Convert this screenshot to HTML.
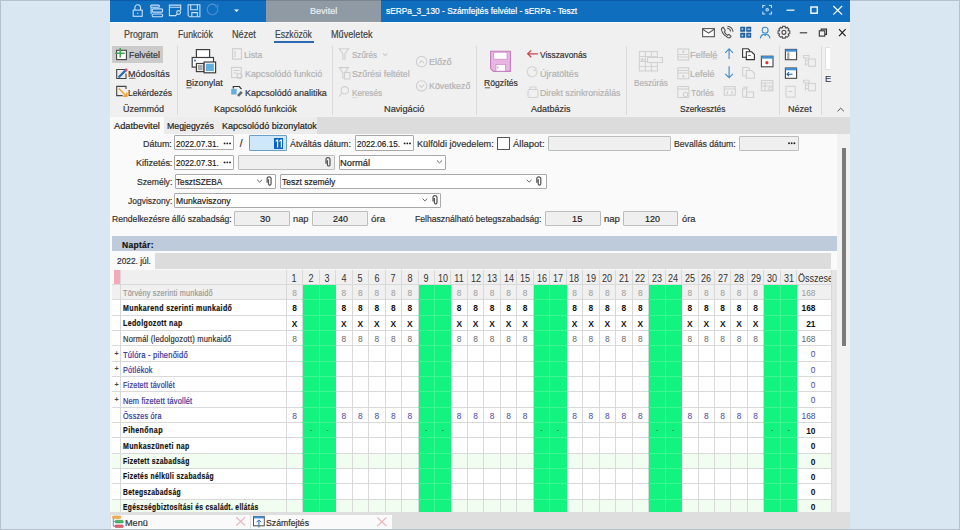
<!DOCTYPE html>
<html><head><meta charset="utf-8">
<style>
*{box-sizing:border-box;margin:0;padding:0}
html,body{width:960px;height:530px;overflow:hidden;background:#d8e7f2;font-family:"Liberation Sans",sans-serif;color:#222;position:relative}
.a{position:absolute}
.t{position:absolute;white-space:nowrap;line-height:1;transform-origin:0 50%;-webkit-text-stroke:0.2px currentColor}
.sep{position:absolute;top:46px;width:1px;height:68.5px;background:#dadada}
.fb{position:absolute;background:#fff;border:1px solid #a9a9a9;border-radius:1px}
.fd{position:absolute;background:#efefef;border:1px solid #bdbdbd;border-radius:1px}
.hl{left:112px;width:719px;height:1px;background:#d9d9d9}
.vl{top:269.5px;width:1px;height:242.5px;background:#d9d9d9}
.hd{position:absolute;top:272.5px;width:20px;text-align:center;font-size:10.5px;line-height:11px;color:#333;transform:scaleX(0.86)}
.pl{position:absolute;left:114.6px;font-size:7.2px;line-height:8px;color:#444;font-weight:700}
.c{position:absolute;width:16px;text-align:center;font-size:8.4px;line-height:9px}
.tot{position:absolute;left:775px;width:40.5px;text-align:right;font-size:8.4px;line-height:9px}
.cg{color:#9a9a9a}
.cb{color:#111;font-weight:700}
.cn{color:#666}
.cbl{color:#4848a8}
.dash{color:#333;font-size:7px;margin-top:-1.5px}
svg{position:absolute;overflow:visible}

</style></head><body>
<!-- window -->
<div class="a" style="left:110px;top:0;width:740px;height:530px;background:#f0f0f0"></div>
<!-- title bar -->
<div class="a" style="left:110px;top:0;width:740px;height:22px;background:#106ebe"></div>
<div class="a" style="left:266.25px;top:0;width:115px;height:22px;background:#909aa4"></div>
<div class="a" style="left:110px;top:0;width:156px;height:1px;background:#0b5aa3"></div>
<div class="a" style="left:266.25px;top:0;width:115px;height:1px;background:#7d858e"></div>
<div class="a" style="left:381.25px;top:0;width:469px;height:1px;background:#0b5aa3"></div>
<div class="a" style="left:110px;top:22px;width:740px;height:1px;background:#f7f7f7"></div>
<div class="a" style="left:274px;top:41px;width:40px;height:2px;background:#2c6bb3"></div>
<!-- ribbon -->
<div class="a" style="left:112px;top:45.5px;width:50.5px;height:17.5px;background:#cbcbcb"></div>
<div class="sep" style="left:177px"></div>
<div class="sep" style="left:332px"></div>
<div class="sep" style="left:476px"></div>
<div class="sep" style="left:626px"></div>
<div class="sep" style="left:779px"></div>
<div class="sep" style="left:821px"></div>
<div class="a" style="left:825px;top:47px;width:5px;height:23px;background:#fff;border:1px solid #e0e0e0;border-right:none"></div>
<!-- doc tab strip -->
<div class="a" style="left:110px;top:116.7px;width:740px;height:17px;background:#dcdcdc"></div>
<div class="a" style="left:110px;top:117.2px;width:53.75px;height:16.5px;background:#fafafa"></div>
<div class="a" style="left:163.75px;top:116.7px;width:52.75px;height:17px;background:#ececec"></div>
<div class="a" style="left:216.5px;top:116.7px;width:100.7px;height:17px;background:#ececec"></div>
<!-- content panel -->
<div class="a" style="left:110px;top:133.7px;width:727px;height:378.5px;background:#fafafa"></div>
<div class="a" style="left:837px;top:133.7px;width:13px;height:378.5px;background:#f2f2f2"></div>
<div class="a" style="left:831px;top:269.5px;width:6px;height:242.5px;background:#e4e4e4"></div>
<div class="a" style="left:841.7px;top:148.3px;width:4.5px;height:198px;background:#7b7b7b"></div>
<!-- form fields -->
<div class="fb" style="left:174.4px;top:135.3px;width:59.6px;height:15px"></div>
<div class="fb" style="left:249.2px;top:135.2px;width:38.1px;height:15.6px;background:#cfe8f9;border-color:#6c9fc6"></div>
<div class="a" style="left:274px;top:137.8px;width:9.4px;height:11px;background:#0a62bd"></div>
<div class="fb" style="left:354.6px;top:135.2px;width:59.8px;height:15.6px"></div>
<div class="a" style="left:497px;top:136.7px;width:13px;height:13px;border:1px solid #555;background:#fff"></div>
<div class="fd" style="left:547.9px;top:135.8px;width:122.9px;height:15px"></div>
<div class="fd" style="left:739.25px;top:135.5px;width:59.5px;height:15px"></div>
<div class="fb" style="left:174.4px;top:154.6px;width:59.6px;height:15px"></div>
<div class="fd" style="left:237.9px;top:154.6px;width:97.3px;height:15px"></div>
<div class="fb" style="left:338.75px;top:154.6px;width:107px;height:15px"></div>
<div class="fb" style="left:174.6px;top:173.8px;width:101.65px;height:15px"></div>
<div class="fb" style="left:280.4px;top:173.8px;width:266.3px;height:15px"></div>
<div class="fb" style="left:174.4px;top:192.6px;width:266.6px;height:15px"></div>
<div class="fd" style="left:234.2px;top:211.25px;width:55.6px;height:14.6px"></div>
<div class="fd" style="left:312px;top:211.25px;width:55.9px;height:14.6px"></div>
<div class="fd" style="left:545.2px;top:211.25px;width:56.3px;height:14.6px"></div>
<div class="fd" style="left:623.3px;top:211.25px;width:55.2px;height:14.6px"></div>
<!-- naptar -->
<div class="a" style="left:112.2px;top:236px;width:724.8px;height:14.8px;background:#bdcbdb"></div>
<div class="a" style="left:112.2px;top:253px;width:718.9px;height:15.6px;background:#dcdcdc"></div>
<div class="a" style="left:112.2px;top:253px;width:42.6px;height:15.6px;background:#fafafa"></div>
<div class="a" style="left:113.5px;top:269.5px;width:717.5px;height:15px;background:#efefef"></div>
<div class="a" style="left:113.5px;top:270px;width:7.2px;height:14.5px;background:#f4a9bb"></div>
<div class="a" style="left:112px;top:284.50px;width:719px;height:15.43px;background:#f0f0f0"></div>
<div class="a" style="left:112px;top:299.83px;width:719px;height:15.43px;background:#ffffff"></div>
<div class="a" style="left:112px;top:315.16px;width:719px;height:15.43px;background:#ffffff"></div>
<div class="a" style="left:112px;top:330.49px;width:719px;height:15.43px;background:#ffffff"></div>
<div class="a" style="left:112px;top:345.82px;width:719px;height:15.43px;background:#ffffff"></div>
<div class="a" style="left:112px;top:361.15px;width:719px;height:15.43px;background:#ffffff"></div>
<div class="a" style="left:112px;top:376.48px;width:719px;height:15.43px;background:#ffffff"></div>
<div class="a" style="left:112px;top:391.81px;width:719px;height:15.43px;background:#ffffff"></div>
<div class="a" style="left:112px;top:407.14px;width:719px;height:15.43px;background:#ffffff"></div>
<div class="a" style="left:112px;top:422.47px;width:719px;height:15.43px;background:#ffffff"></div>
<div class="a" style="left:112px;top:437.80px;width:719px;height:15.43px;background:#ffffff"></div>
<div class="a" style="left:112px;top:453.13px;width:719px;height:15.43px;background:#f0fdf0"></div>
<div class="a" style="left:112px;top:468.46px;width:719px;height:15.43px;background:#ffffff"></div>
<div class="a" style="left:112px;top:483.79px;width:719px;height:15.43px;background:#ffffff"></div>
<div class="a" style="left:112px;top:499.12px;width:719px;height:15.43px;background:#f0fdf0"></div>
<div class="a hl" style="top:284.00px"></div>
<div class="a hl" style="top:299.33px"></div>
<div class="a hl" style="top:314.66px"></div>
<div class="a hl" style="top:329.99px"></div>
<div class="a hl" style="top:345.32px"></div>
<div class="a hl" style="top:360.65px"></div>
<div class="a hl" style="top:375.98px"></div>
<div class="a hl" style="top:391.31px"></div>
<div class="a hl" style="top:406.64px"></div>
<div class="a hl" style="top:421.97px"></div>
<div class="a hl" style="top:437.30px"></div>
<div class="a hl" style="top:452.63px"></div>
<div class="a hl" style="top:467.96px"></div>
<div class="a hl" style="top:483.29px"></div>
<div class="a hl" style="top:498.62px"></div>
<div class="a vl" style="left:120.20px"></div>
<div class="a vl" style="left:285.75px"></div>
<div class="a vl" style="left:302.22px"></div>
<div class="a vl" style="left:318.69px"></div>
<div class="a vl" style="left:335.16px"></div>
<div class="a vl" style="left:351.63px"></div>
<div class="a vl" style="left:368.10px"></div>
<div class="a vl" style="left:384.57px"></div>
<div class="a vl" style="left:401.04px"></div>
<div class="a vl" style="left:417.51px"></div>
<div class="a vl" style="left:433.98px"></div>
<div class="a vl" style="left:450.45px"></div>
<div class="a vl" style="left:466.92px"></div>
<div class="a vl" style="left:483.39px"></div>
<div class="a vl" style="left:499.86px"></div>
<div class="a vl" style="left:516.33px"></div>
<div class="a vl" style="left:532.80px"></div>
<div class="a vl" style="left:549.27px"></div>
<div class="a vl" style="left:565.74px"></div>
<div class="a vl" style="left:582.21px"></div>
<div class="a vl" style="left:598.68px"></div>
<div class="a vl" style="left:615.15px"></div>
<div class="a vl" style="left:631.62px"></div>
<div class="a vl" style="left:648.09px"></div>
<div class="a vl" style="left:664.56px"></div>
<div class="a vl" style="left:681.03px"></div>
<div class="a vl" style="left:697.50px"></div>
<div class="a vl" style="left:713.97px"></div>
<div class="a vl" style="left:730.44px"></div>
<div class="a vl" style="left:746.91px"></div>
<div class="a vl" style="left:763.38px"></div>
<div class="a vl" style="left:779.85px"></div>
<div class="a vl" style="left:796.32px"></div>
<div class="a vl" style="left:830.50px"></div>
<div class="a" style="left:303.22px;top:284.5px;width:16.47px;height:227.5px;background:#12f47f"></div>
<div class="a" style="left:319.69px;top:284.5px;width:16.47px;height:227.5px;background:#12f47f"></div>
<div class="a" style="left:418.51px;top:284.5px;width:16.47px;height:227.5px;background:#12f47f"></div>
<div class="a" style="left:434.98px;top:284.5px;width:16.47px;height:227.5px;background:#12f47f"></div>
<div class="a" style="left:533.80px;top:284.5px;width:16.47px;height:227.5px;background:#12f47f"></div>
<div class="a" style="left:550.27px;top:284.5px;width:16.47px;height:227.5px;background:#12f47f"></div>
<div class="a" style="left:649.09px;top:284.5px;width:16.47px;height:227.5px;background:#12f47f"></div>
<div class="a" style="left:665.56px;top:284.5px;width:16.47px;height:227.5px;background:#12f47f"></div>
<div class="a" style="left:764.38px;top:284.5px;width:16.47px;height:227.5px;background:#12f47f"></div>
<div class="a" style="left:780.85px;top:284.5px;width:16.47px;height:227.5px;background:#12f47f"></div>
<div class="a" style="left:302.22px;top:299.33px;width:17.47px;height:1px;background:#3ff590"></div>
<div class="a" style="left:302.22px;top:314.66px;width:17.47px;height:1px;background:#3ff590"></div>
<div class="a" style="left:302.22px;top:329.99px;width:17.47px;height:1px;background:#3ff590"></div>
<div class="a" style="left:302.22px;top:345.32px;width:17.47px;height:1px;background:#3ff590"></div>
<div class="a" style="left:302.22px;top:360.65px;width:17.47px;height:1px;background:#3ff590"></div>
<div class="a" style="left:302.22px;top:375.98px;width:17.47px;height:1px;background:#3ff590"></div>
<div class="a" style="left:302.22px;top:391.31px;width:17.47px;height:1px;background:#3ff590"></div>
<div class="a" style="left:302.22px;top:406.64px;width:17.47px;height:1px;background:#3ff590"></div>
<div class="a" style="left:302.22px;top:421.97px;width:17.47px;height:1px;background:#3ff590"></div>
<div class="a" style="left:302.22px;top:437.30px;width:17.47px;height:1px;background:#3ff590"></div>
<div class="a" style="left:302.22px;top:452.63px;width:17.47px;height:1px;background:#3ff590"></div>
<div class="a" style="left:302.22px;top:467.96px;width:17.47px;height:1px;background:#3ff590"></div>
<div class="a" style="left:302.22px;top:483.29px;width:17.47px;height:1px;background:#3ff590"></div>
<div class="a" style="left:302.22px;top:498.62px;width:17.47px;height:1px;background:#3ff590"></div>
<div class="a" style="left:318.69px;top:284.5px;width:1px;height:227.5px;background:#3ff590"></div>
<div class="a" style="left:318.69px;top:299.33px;width:17.47px;height:1px;background:#3ff590"></div>
<div class="a" style="left:318.69px;top:314.66px;width:17.47px;height:1px;background:#3ff590"></div>
<div class="a" style="left:318.69px;top:329.99px;width:17.47px;height:1px;background:#3ff590"></div>
<div class="a" style="left:318.69px;top:345.32px;width:17.47px;height:1px;background:#3ff590"></div>
<div class="a" style="left:318.69px;top:360.65px;width:17.47px;height:1px;background:#3ff590"></div>
<div class="a" style="left:318.69px;top:375.98px;width:17.47px;height:1px;background:#3ff590"></div>
<div class="a" style="left:318.69px;top:391.31px;width:17.47px;height:1px;background:#3ff590"></div>
<div class="a" style="left:318.69px;top:406.64px;width:17.47px;height:1px;background:#3ff590"></div>
<div class="a" style="left:318.69px;top:421.97px;width:17.47px;height:1px;background:#3ff590"></div>
<div class="a" style="left:318.69px;top:437.30px;width:17.47px;height:1px;background:#3ff590"></div>
<div class="a" style="left:318.69px;top:452.63px;width:17.47px;height:1px;background:#3ff590"></div>
<div class="a" style="left:318.69px;top:467.96px;width:17.47px;height:1px;background:#3ff590"></div>
<div class="a" style="left:318.69px;top:483.29px;width:17.47px;height:1px;background:#3ff590"></div>
<div class="a" style="left:318.69px;top:498.62px;width:17.47px;height:1px;background:#3ff590"></div>
<div class="a" style="left:417.51px;top:299.33px;width:17.47px;height:1px;background:#3ff590"></div>
<div class="a" style="left:417.51px;top:314.66px;width:17.47px;height:1px;background:#3ff590"></div>
<div class="a" style="left:417.51px;top:329.99px;width:17.47px;height:1px;background:#3ff590"></div>
<div class="a" style="left:417.51px;top:345.32px;width:17.47px;height:1px;background:#3ff590"></div>
<div class="a" style="left:417.51px;top:360.65px;width:17.47px;height:1px;background:#3ff590"></div>
<div class="a" style="left:417.51px;top:375.98px;width:17.47px;height:1px;background:#3ff590"></div>
<div class="a" style="left:417.51px;top:391.31px;width:17.47px;height:1px;background:#3ff590"></div>
<div class="a" style="left:417.51px;top:406.64px;width:17.47px;height:1px;background:#3ff590"></div>
<div class="a" style="left:417.51px;top:421.97px;width:17.47px;height:1px;background:#3ff590"></div>
<div class="a" style="left:417.51px;top:437.30px;width:17.47px;height:1px;background:#3ff590"></div>
<div class="a" style="left:417.51px;top:452.63px;width:17.47px;height:1px;background:#3ff590"></div>
<div class="a" style="left:417.51px;top:467.96px;width:17.47px;height:1px;background:#3ff590"></div>
<div class="a" style="left:417.51px;top:483.29px;width:17.47px;height:1px;background:#3ff590"></div>
<div class="a" style="left:417.51px;top:498.62px;width:17.47px;height:1px;background:#3ff590"></div>
<div class="a" style="left:433.98px;top:284.5px;width:1px;height:227.5px;background:#3ff590"></div>
<div class="a" style="left:433.98px;top:299.33px;width:17.47px;height:1px;background:#3ff590"></div>
<div class="a" style="left:433.98px;top:314.66px;width:17.47px;height:1px;background:#3ff590"></div>
<div class="a" style="left:433.98px;top:329.99px;width:17.47px;height:1px;background:#3ff590"></div>
<div class="a" style="left:433.98px;top:345.32px;width:17.47px;height:1px;background:#3ff590"></div>
<div class="a" style="left:433.98px;top:360.65px;width:17.47px;height:1px;background:#3ff590"></div>
<div class="a" style="left:433.98px;top:375.98px;width:17.47px;height:1px;background:#3ff590"></div>
<div class="a" style="left:433.98px;top:391.31px;width:17.47px;height:1px;background:#3ff590"></div>
<div class="a" style="left:433.98px;top:406.64px;width:17.47px;height:1px;background:#3ff590"></div>
<div class="a" style="left:433.98px;top:421.97px;width:17.47px;height:1px;background:#3ff590"></div>
<div class="a" style="left:433.98px;top:437.30px;width:17.47px;height:1px;background:#3ff590"></div>
<div class="a" style="left:433.98px;top:452.63px;width:17.47px;height:1px;background:#3ff590"></div>
<div class="a" style="left:433.98px;top:467.96px;width:17.47px;height:1px;background:#3ff590"></div>
<div class="a" style="left:433.98px;top:483.29px;width:17.47px;height:1px;background:#3ff590"></div>
<div class="a" style="left:433.98px;top:498.62px;width:17.47px;height:1px;background:#3ff590"></div>
<div class="a" style="left:532.80px;top:299.33px;width:17.47px;height:1px;background:#3ff590"></div>
<div class="a" style="left:532.80px;top:314.66px;width:17.47px;height:1px;background:#3ff590"></div>
<div class="a" style="left:532.80px;top:329.99px;width:17.47px;height:1px;background:#3ff590"></div>
<div class="a" style="left:532.80px;top:345.32px;width:17.47px;height:1px;background:#3ff590"></div>
<div class="a" style="left:532.80px;top:360.65px;width:17.47px;height:1px;background:#3ff590"></div>
<div class="a" style="left:532.80px;top:375.98px;width:17.47px;height:1px;background:#3ff590"></div>
<div class="a" style="left:532.80px;top:391.31px;width:17.47px;height:1px;background:#3ff590"></div>
<div class="a" style="left:532.80px;top:406.64px;width:17.47px;height:1px;background:#3ff590"></div>
<div class="a" style="left:532.80px;top:421.97px;width:17.47px;height:1px;background:#3ff590"></div>
<div class="a" style="left:532.80px;top:437.30px;width:17.47px;height:1px;background:#3ff590"></div>
<div class="a" style="left:532.80px;top:452.63px;width:17.47px;height:1px;background:#3ff590"></div>
<div class="a" style="left:532.80px;top:467.96px;width:17.47px;height:1px;background:#3ff590"></div>
<div class="a" style="left:532.80px;top:483.29px;width:17.47px;height:1px;background:#3ff590"></div>
<div class="a" style="left:532.80px;top:498.62px;width:17.47px;height:1px;background:#3ff590"></div>
<div class="a" style="left:549.27px;top:284.5px;width:1px;height:227.5px;background:#3ff590"></div>
<div class="a" style="left:549.27px;top:299.33px;width:17.47px;height:1px;background:#3ff590"></div>
<div class="a" style="left:549.27px;top:314.66px;width:17.47px;height:1px;background:#3ff590"></div>
<div class="a" style="left:549.27px;top:329.99px;width:17.47px;height:1px;background:#3ff590"></div>
<div class="a" style="left:549.27px;top:345.32px;width:17.47px;height:1px;background:#3ff590"></div>
<div class="a" style="left:549.27px;top:360.65px;width:17.47px;height:1px;background:#3ff590"></div>
<div class="a" style="left:549.27px;top:375.98px;width:17.47px;height:1px;background:#3ff590"></div>
<div class="a" style="left:549.27px;top:391.31px;width:17.47px;height:1px;background:#3ff590"></div>
<div class="a" style="left:549.27px;top:406.64px;width:17.47px;height:1px;background:#3ff590"></div>
<div class="a" style="left:549.27px;top:421.97px;width:17.47px;height:1px;background:#3ff590"></div>
<div class="a" style="left:549.27px;top:437.30px;width:17.47px;height:1px;background:#3ff590"></div>
<div class="a" style="left:549.27px;top:452.63px;width:17.47px;height:1px;background:#3ff590"></div>
<div class="a" style="left:549.27px;top:467.96px;width:17.47px;height:1px;background:#3ff590"></div>
<div class="a" style="left:549.27px;top:483.29px;width:17.47px;height:1px;background:#3ff590"></div>
<div class="a" style="left:549.27px;top:498.62px;width:17.47px;height:1px;background:#3ff590"></div>
<div class="a" style="left:648.09px;top:299.33px;width:17.47px;height:1px;background:#3ff590"></div>
<div class="a" style="left:648.09px;top:314.66px;width:17.47px;height:1px;background:#3ff590"></div>
<div class="a" style="left:648.09px;top:329.99px;width:17.47px;height:1px;background:#3ff590"></div>
<div class="a" style="left:648.09px;top:345.32px;width:17.47px;height:1px;background:#3ff590"></div>
<div class="a" style="left:648.09px;top:360.65px;width:17.47px;height:1px;background:#3ff590"></div>
<div class="a" style="left:648.09px;top:375.98px;width:17.47px;height:1px;background:#3ff590"></div>
<div class="a" style="left:648.09px;top:391.31px;width:17.47px;height:1px;background:#3ff590"></div>
<div class="a" style="left:648.09px;top:406.64px;width:17.47px;height:1px;background:#3ff590"></div>
<div class="a" style="left:648.09px;top:421.97px;width:17.47px;height:1px;background:#3ff590"></div>
<div class="a" style="left:648.09px;top:437.30px;width:17.47px;height:1px;background:#3ff590"></div>
<div class="a" style="left:648.09px;top:452.63px;width:17.47px;height:1px;background:#3ff590"></div>
<div class="a" style="left:648.09px;top:467.96px;width:17.47px;height:1px;background:#3ff590"></div>
<div class="a" style="left:648.09px;top:483.29px;width:17.47px;height:1px;background:#3ff590"></div>
<div class="a" style="left:648.09px;top:498.62px;width:17.47px;height:1px;background:#3ff590"></div>
<div class="a" style="left:664.56px;top:284.5px;width:1px;height:227.5px;background:#3ff590"></div>
<div class="a" style="left:664.56px;top:299.33px;width:17.47px;height:1px;background:#3ff590"></div>
<div class="a" style="left:664.56px;top:314.66px;width:17.47px;height:1px;background:#3ff590"></div>
<div class="a" style="left:664.56px;top:329.99px;width:17.47px;height:1px;background:#3ff590"></div>
<div class="a" style="left:664.56px;top:345.32px;width:17.47px;height:1px;background:#3ff590"></div>
<div class="a" style="left:664.56px;top:360.65px;width:17.47px;height:1px;background:#3ff590"></div>
<div class="a" style="left:664.56px;top:375.98px;width:17.47px;height:1px;background:#3ff590"></div>
<div class="a" style="left:664.56px;top:391.31px;width:17.47px;height:1px;background:#3ff590"></div>
<div class="a" style="left:664.56px;top:406.64px;width:17.47px;height:1px;background:#3ff590"></div>
<div class="a" style="left:664.56px;top:421.97px;width:17.47px;height:1px;background:#3ff590"></div>
<div class="a" style="left:664.56px;top:437.30px;width:17.47px;height:1px;background:#3ff590"></div>
<div class="a" style="left:664.56px;top:452.63px;width:17.47px;height:1px;background:#3ff590"></div>
<div class="a" style="left:664.56px;top:467.96px;width:17.47px;height:1px;background:#3ff590"></div>
<div class="a" style="left:664.56px;top:483.29px;width:17.47px;height:1px;background:#3ff590"></div>
<div class="a" style="left:664.56px;top:498.62px;width:17.47px;height:1px;background:#3ff590"></div>
<div class="a" style="left:763.38px;top:299.33px;width:17.47px;height:1px;background:#3ff590"></div>
<div class="a" style="left:763.38px;top:314.66px;width:17.47px;height:1px;background:#3ff590"></div>
<div class="a" style="left:763.38px;top:329.99px;width:17.47px;height:1px;background:#3ff590"></div>
<div class="a" style="left:763.38px;top:345.32px;width:17.47px;height:1px;background:#3ff590"></div>
<div class="a" style="left:763.38px;top:360.65px;width:17.47px;height:1px;background:#3ff590"></div>
<div class="a" style="left:763.38px;top:375.98px;width:17.47px;height:1px;background:#3ff590"></div>
<div class="a" style="left:763.38px;top:391.31px;width:17.47px;height:1px;background:#3ff590"></div>
<div class="a" style="left:763.38px;top:406.64px;width:17.47px;height:1px;background:#3ff590"></div>
<div class="a" style="left:763.38px;top:421.97px;width:17.47px;height:1px;background:#3ff590"></div>
<div class="a" style="left:763.38px;top:437.30px;width:17.47px;height:1px;background:#3ff590"></div>
<div class="a" style="left:763.38px;top:452.63px;width:17.47px;height:1px;background:#3ff590"></div>
<div class="a" style="left:763.38px;top:467.96px;width:17.47px;height:1px;background:#3ff590"></div>
<div class="a" style="left:763.38px;top:483.29px;width:17.47px;height:1px;background:#3ff590"></div>
<div class="a" style="left:763.38px;top:498.62px;width:17.47px;height:1px;background:#3ff590"></div>
<div class="a" style="left:779.85px;top:284.5px;width:1px;height:227.5px;background:#3ff590"></div>
<div class="a" style="left:779.85px;top:299.33px;width:17.47px;height:1px;background:#3ff590"></div>
<div class="a" style="left:779.85px;top:314.66px;width:17.47px;height:1px;background:#3ff590"></div>
<div class="a" style="left:779.85px;top:329.99px;width:17.47px;height:1px;background:#3ff590"></div>
<div class="a" style="left:779.85px;top:345.32px;width:17.47px;height:1px;background:#3ff590"></div>
<div class="a" style="left:779.85px;top:360.65px;width:17.47px;height:1px;background:#3ff590"></div>
<div class="a" style="left:779.85px;top:375.98px;width:17.47px;height:1px;background:#3ff590"></div>
<div class="a" style="left:779.85px;top:391.31px;width:17.47px;height:1px;background:#3ff590"></div>
<div class="a" style="left:779.85px;top:406.64px;width:17.47px;height:1px;background:#3ff590"></div>
<div class="a" style="left:779.85px;top:421.97px;width:17.47px;height:1px;background:#3ff590"></div>
<div class="a" style="left:779.85px;top:437.30px;width:17.47px;height:1px;background:#3ff590"></div>
<div class="a" style="left:779.85px;top:452.63px;width:17.47px;height:1px;background:#3ff590"></div>
<div class="a" style="left:779.85px;top:467.96px;width:17.47px;height:1px;background:#3ff590"></div>
<div class="a" style="left:779.85px;top:483.29px;width:17.47px;height:1px;background:#3ff590"></div>
<div class="a" style="left:779.85px;top:498.62px;width:17.47px;height:1px;background:#3ff590"></div>
<div class="hd" style="left:284.49px">1</div>
<div class="hd" style="left:300.95px">2</div>
<div class="hd" style="left:317.43px">3</div>
<div class="hd" style="left:333.89px">4</div>
<div class="hd" style="left:350.37px">5</div>
<div class="hd" style="left:366.83px">6</div>
<div class="hd" style="left:383.31px">7</div>
<div class="hd" style="left:399.77px">8</div>
<div class="hd" style="left:416.25px">9</div>
<div class="hd" style="left:432.71px">10</div>
<div class="hd" style="left:449.19px">11</div>
<div class="hd" style="left:465.65px">12</div>
<div class="hd" style="left:482.12px">13</div>
<div class="hd" style="left:498.59px">14</div>
<div class="hd" style="left:515.07px">15</div>
<div class="hd" style="left:531.53px">16</div>
<div class="hd" style="left:548.00px">17</div>
<div class="hd" style="left:564.47px">18</div>
<div class="hd" style="left:580.94px">19</div>
<div class="hd" style="left:597.41px">20</div>
<div class="hd" style="left:613.88px">21</div>
<div class="hd" style="left:630.36px">22</div>
<div class="hd" style="left:646.83px">23</div>
<div class="hd" style="left:663.29px">24</div>
<div class="hd" style="left:679.76px">25</div>
<div class="hd" style="left:696.23px">26</div>
<div class="hd" style="left:712.70px">27</div>
<div class="hd" style="left:729.17px">28</div>
<div class="hd" style="left:745.64px">29</div>
<div class="hd" style="left:762.12px">30</div>
<div class="hd" style="left:778.59px">31</div>
<div class="a" style="left:797px;top:269.5px;width:34px;height:15px;overflow:hidden"><div class="hd" style="left:1px;top:3px;width:60px;text-align:left;transform-origin:0 0;transform:scaleX(0.86)">Összesen</div></div>
<div class="pl" style="top:349.88px">+</div>
<div class="pl" style="top:365.21px">+</div>
<div class="pl" style="top:380.55px">+</div>
<div class="pl" style="top:395.88px">+</div>
<div class="c cg" style="left:286.49px;top:288.87px">8</div>
<div class="c cb" style="left:286.49px;top:304.19px">8</div>
<div class="c cb" style="left:286.49px;top:319.53px">X</div>
<div class="c cn" style="left:286.49px;top:334.86px">8</div>
<div class="c cbl" style="left:286.49px;top:411.50px">8</div>
<div class="c dash" style="left:302.95px;top:426.84px">-</div>
<div class="c dash" style="left:319.43px;top:426.84px">-</div>
<div class="c cg" style="left:335.89px;top:288.87px">8</div>
<div class="c cb" style="left:335.89px;top:304.19px">8</div>
<div class="c cb" style="left:335.89px;top:319.53px">X</div>
<div class="c cn" style="left:335.89px;top:334.86px">8</div>
<div class="c cbl" style="left:335.89px;top:411.50px">8</div>
<div class="c cg" style="left:352.37px;top:288.87px">8</div>
<div class="c cb" style="left:352.37px;top:304.19px">8</div>
<div class="c cb" style="left:352.37px;top:319.53px">X</div>
<div class="c cn" style="left:352.37px;top:334.86px">8</div>
<div class="c cbl" style="left:352.37px;top:411.50px">8</div>
<div class="c cg" style="left:368.83px;top:288.87px">8</div>
<div class="c cb" style="left:368.83px;top:304.19px">8</div>
<div class="c cb" style="left:368.83px;top:319.53px">X</div>
<div class="c cn" style="left:368.83px;top:334.86px">8</div>
<div class="c cbl" style="left:368.83px;top:411.50px">8</div>
<div class="c cg" style="left:385.31px;top:288.87px">8</div>
<div class="c cb" style="left:385.31px;top:304.19px">8</div>
<div class="c cb" style="left:385.31px;top:319.53px">X</div>
<div class="c cn" style="left:385.31px;top:334.86px">8</div>
<div class="c cbl" style="left:385.31px;top:411.50px">8</div>
<div class="c cg" style="left:401.77px;top:288.87px">8</div>
<div class="c cb" style="left:401.77px;top:304.19px">8</div>
<div class="c cb" style="left:401.77px;top:319.53px">X</div>
<div class="c cn" style="left:401.77px;top:334.86px">8</div>
<div class="c cbl" style="left:401.77px;top:411.50px">8</div>
<div class="c dash" style="left:418.25px;top:426.84px">-</div>
<div class="c dash" style="left:434.71px;top:426.84px">-</div>
<div class="c cg" style="left:451.19px;top:288.87px">8</div>
<div class="c cb" style="left:451.19px;top:304.19px">8</div>
<div class="c cb" style="left:451.19px;top:319.53px">X</div>
<div class="c cn" style="left:451.19px;top:334.86px">8</div>
<div class="c cbl" style="left:451.19px;top:411.50px">8</div>
<div class="c cg" style="left:467.65px;top:288.87px">8</div>
<div class="c cb" style="left:467.65px;top:304.19px">8</div>
<div class="c cb" style="left:467.65px;top:319.53px">X</div>
<div class="c cn" style="left:467.65px;top:334.86px">8</div>
<div class="c cbl" style="left:467.65px;top:411.50px">8</div>
<div class="c cg" style="left:484.12px;top:288.87px">8</div>
<div class="c cb" style="left:484.12px;top:304.19px">8</div>
<div class="c cb" style="left:484.12px;top:319.53px">X</div>
<div class="c cn" style="left:484.12px;top:334.86px">8</div>
<div class="c cbl" style="left:484.12px;top:411.50px">8</div>
<div class="c cg" style="left:500.59px;top:288.87px">8</div>
<div class="c cb" style="left:500.59px;top:304.19px">8</div>
<div class="c cb" style="left:500.59px;top:319.53px">X</div>
<div class="c cn" style="left:500.59px;top:334.86px">8</div>
<div class="c cbl" style="left:500.59px;top:411.50px">8</div>
<div class="c cg" style="left:517.07px;top:288.87px">8</div>
<div class="c cb" style="left:517.07px;top:304.19px">8</div>
<div class="c cb" style="left:517.07px;top:319.53px">X</div>
<div class="c cn" style="left:517.07px;top:334.86px">8</div>
<div class="c cbl" style="left:517.07px;top:411.50px">8</div>
<div class="c dash" style="left:533.53px;top:426.84px">-</div>
<div class="c dash" style="left:550.00px;top:426.84px">-</div>
<div class="c cg" style="left:566.47px;top:288.87px">8</div>
<div class="c cb" style="left:566.47px;top:304.19px">8</div>
<div class="c cb" style="left:566.47px;top:319.53px">X</div>
<div class="c cn" style="left:566.47px;top:334.86px">8</div>
<div class="c cbl" style="left:566.47px;top:411.50px">8</div>
<div class="c cg" style="left:582.94px;top:288.87px">8</div>
<div class="c cb" style="left:582.94px;top:304.19px">8</div>
<div class="c cb" style="left:582.94px;top:319.53px">X</div>
<div class="c cn" style="left:582.94px;top:334.86px">8</div>
<div class="c cbl" style="left:582.94px;top:411.50px">8</div>
<div class="c cg" style="left:599.41px;top:288.87px">8</div>
<div class="c cb" style="left:599.41px;top:304.19px">8</div>
<div class="c cb" style="left:599.41px;top:319.53px">X</div>
<div class="c cn" style="left:599.41px;top:334.86px">8</div>
<div class="c cbl" style="left:599.41px;top:411.50px">8</div>
<div class="c cg" style="left:615.88px;top:288.87px">8</div>
<div class="c cb" style="left:615.88px;top:304.19px">8</div>
<div class="c cb" style="left:615.88px;top:319.53px">X</div>
<div class="c cn" style="left:615.88px;top:334.86px">8</div>
<div class="c cbl" style="left:615.88px;top:411.50px">8</div>
<div class="c cg" style="left:632.36px;top:288.87px">8</div>
<div class="c cb" style="left:632.36px;top:304.19px">8</div>
<div class="c cb" style="left:632.36px;top:319.53px">X</div>
<div class="c cn" style="left:632.36px;top:334.86px">8</div>
<div class="c cbl" style="left:632.36px;top:411.50px">8</div>
<div class="c dash" style="left:648.83px;top:426.84px">-</div>
<div class="c dash" style="left:665.29px;top:426.84px">-</div>
<div class="c cg" style="left:681.76px;top:288.87px">8</div>
<div class="c cb" style="left:681.76px;top:304.19px">8</div>
<div class="c cb" style="left:681.76px;top:319.53px">X</div>
<div class="c cn" style="left:681.76px;top:334.86px">8</div>
<div class="c cbl" style="left:681.76px;top:411.50px">8</div>
<div class="c cg" style="left:698.23px;top:288.87px">8</div>
<div class="c cb" style="left:698.23px;top:304.19px">8</div>
<div class="c cb" style="left:698.23px;top:319.53px">X</div>
<div class="c cn" style="left:698.23px;top:334.86px">8</div>
<div class="c cbl" style="left:698.23px;top:411.50px">8</div>
<div class="c cg" style="left:714.70px;top:288.87px">8</div>
<div class="c cb" style="left:714.70px;top:304.19px">8</div>
<div class="c cb" style="left:714.70px;top:319.53px">X</div>
<div class="c cn" style="left:714.70px;top:334.86px">8</div>
<div class="c cbl" style="left:714.70px;top:411.50px">8</div>
<div class="c cg" style="left:731.17px;top:288.87px">8</div>
<div class="c cb" style="left:731.17px;top:304.19px">8</div>
<div class="c cb" style="left:731.17px;top:319.53px">X</div>
<div class="c cn" style="left:731.17px;top:334.86px">8</div>
<div class="c cbl" style="left:731.17px;top:411.50px">8</div>
<div class="c cg" style="left:747.64px;top:288.87px">8</div>
<div class="c cb" style="left:747.64px;top:304.19px">8</div>
<div class="c cb" style="left:747.64px;top:319.53px">X</div>
<div class="c cn" style="left:747.64px;top:334.86px">8</div>
<div class="c cbl" style="left:747.64px;top:411.50px">8</div>
<div class="c dash" style="left:764.12px;top:426.84px">-</div>
<div class="c dash" style="left:780.59px;top:426.84px">-</div>
<div class="tot cg" style="top:288.87px">168</div>
<div class="tot cb" style="top:304.19px">168</div>
<div class="tot cb" style="top:319.53px">21</div>
<div class="tot cn" style="top:334.86px">168</div>
<div class="tot cbl" style="top:350.19px">0</div>
<div class="tot cbl" style="top:365.51px">0</div>
<div class="tot cbl" style="top:380.85px">0</div>
<div class="tot cbl" style="top:396.18px">0</div>
<div class="tot cbl" style="top:411.50px">168</div>
<div class="tot cb" style="top:426.84px">10</div>
<div class="tot cb" style="top:442.17px">0</div>
<div class="tot cb" style="top:457.50px">0</div>
<div class="tot cb" style="top:472.83px">0</div>
<div class="tot cb" style="top:488.15px">0</div>
<div class="tot cb" style="top:503.49px">0</div>
<!-- taskbar -->
<div class="a" style="left:110px;top:512px;width:740px;height:18px;background:#dedede"></div>
<div class="a" style="left:111px;top:514.5px;width:280.5px;height:14.5px;background:#fafafa"></div>
<div class="a" style="left:250px;top:514.5px;width:1px;height:14.5px;background:#e2e2e2"></div>

<div class="a" style="left:0;top:0;width:110px;height:1px;background:#b3c2ce"></div>
<div class="a" style="left:850px;top:0;width:110px;height:1px;background:#b3c2ce"></div>
<div class="a" style="left:0;top:529px;width:960px;height:1px;background:#b3bfca"></div>
<div class="a" style="left:0;top:0;width:1px;height:530px;background:#b3c2ce"></div>
<div class="a" style="left:959px;top:0;width:1px;height:530px;background:#b3c2ce"></div>
<div class="a" style="left:1px;top:1px;width:109px;height:2px;background:#dbe9f4"></div>
<div class="a" style="left:850px;top:1px;width:109px;height:2px;background:#dbe9f4"></div>
<svg width="960" height="530" viewBox="0 0 960 530" style="left:0;top:0" fill="none" stroke-linejoin="miter">
<!-- title bar icons -->
<g stroke="#c6e0f8" stroke-width="1.1">
  <path d="M134.9 10V7.6a2.8 2.8 0 0 1 5.6 0V10"/>
  <rect x="133.2" y="10.1" width="9" height="6.2"/>
  <path d="M137.7 12.8v1.2" stroke-width="1.2"/>
  <rect x="150.6" y="5.1" width="8.8" height="2.2" rx="1"/>
  <rect x="152.2" y="8.9" width="10.4" height="3.2" rx="1"/>
  <rect x="152.2" y="14" width="10.4" height="2.8" rx="1"/>
  <path d="M151.1 7.3v6.8"/>
  <path d="M176 15.6H169.4V5.1h11.3v5.5M169.4 7.3h11.3"/>
  <circle cx="178.6" cy="12.5" r="1.9"/>
  <path d="M177.2 13.9l-1.8 2"/>
  <path d="M188.1 4.8h11.8v12h-10.3l-1.5-1.5z"/>
  <path d="M190.7 4.8v4.9h6.7V4.8M191.8 16.8v-4.2h5.6v4.2"/>
</g>
<g stroke="#4f8fd3" stroke-width="1.1">
  <path d="M217.6 8.2a5.3 5.3 0 1 1 -1.2 -2.3"/>
  <path d="M217.7 4.5v2.4h-2.3"/>
</g>
<path d="M234 9.4h5l-2.5 2.6z" fill="#fff"/>
<g stroke="#c6e0f8" stroke-width="1.1">
  <path d="M762.8 8V5.5h2.5M769 5.5h2.5V8M771.5 11.5v2.5H769M765.3 14h-2.5v-2.5"/>
  <circle cx="767.2" cy="9.8" r="1.2"/>
</g>
<g stroke="#fff" stroke-width="1.2">
  <path d="M786.5 10.2h8"/>
  <rect x="810.9" y="7" width="6.4" height="6.2" stroke-width="1.4"/>
  <path d="M833.3 6l8.8 8.6M842.1 6l-8.8 8.6"/>
</g>
<!-- tab row right icons -->
<g stroke="#555" stroke-width="1.1">
  <rect x="702.6" y="28.6" width="11.8" height="8.1" fill="#fff"/>
  <path d="M702.8 29.2l5.7 4 5.7-4"/>
</g>
<g stroke="#555" stroke-width="1.1">
  <path d="M723.3 27.2c-1.5 .5-2.2 1.5-1.8 3 .9 3 3.1 5.6 6.2 7.3 1.4 .7 2.6 .2 3.3-1.1l-2-2-1.5 .9c-1.3-.8-2.4-2-3.1-3.4l.9-1.4z"/>
  <path d="M727 28.2a3.5 3.5 0 0 1 3.6 3.4M727.4 26.2a5.7 5.7 0 0 1 5.6 5.5"/>
</g>
<g fill="#23629f">
  <rect x="740.2" y="26.7" width="5" height="5" rx=".5"/>
  <rect x="746.2" y="26.7" width="5" height="5" rx=".5"/>
  <rect x="740.2" y="32.7" width="5" height="5" rx=".5"/>
  <rect x="746.2" y="32.7" width="5" height="5" rx=".5"/>
</g>
<g fill="#b9dcf5"><rect x="741.6" y="28.2" width="1.6" height="1.6"/><rect x="747.4" y="28.6" width="2.8" height="1.2"/><rect x="741.6" y="34.6" width="1.6" height="1.6"/><rect x="747.6" y="34.2" width="2.4" height="2" fill="#6fa6d6"/></g>
<g stroke="#3a8ccf" stroke-width="1.1">
  <circle cx="765.1" cy="30.2" r="3"/>
  <path d="M760.3 38.3c.4-2.6 2.3-4 4.8-4s4.4 1.4 4.8 4"/>
  <path d="M763.8 34.5l1.3 1.5 1.3-1.5" stroke-width=".8"/>
</g>
<g stroke="#555" stroke-width="1.15">
  <circle cx="783.9" cy="32.3" r="2"/>
  <path d="M789.76 30.99 L789.76 33.61 L788.21 33.92 L788.09 34.20 L788.97 35.51 L787.11 37.37 L785.80 36.49 L785.52 36.61 L785.21 38.16 L782.59 38.16 L782.28 36.61 L782.00 36.49 L780.69 37.37 L778.83 35.51 L779.71 34.20 L779.59 33.92 L778.04 33.61 L778.04 30.99 L779.59 30.68 L779.71 30.40 L778.83 29.09 L780.69 27.23 L782.00 28.11 L782.28 27.99 L782.59 26.44 L785.21 26.44 L785.52 27.99 L785.80 28.11 L787.11 27.23 L788.97 29.09 L788.09 30.40 L788.21 30.68Z"/>
</g>
<g stroke="#333" stroke-width="1.1">
  <path d="M799.8 32.8h7.4"/>
  <rect x="819.3" y="30.8" width="5.5" height="5.3"/>
  <path d="M821.2 30.8v-1.7h5.3v5.3h-1.7"/>
  <path d="M839 29.1l6.6 7M845.6 29.1l-6.6 7" stroke="#222" stroke-width="1.2"/>
</g>
<!-- ribbon: Uzemmod -->
<rect x="116.6" y="50.3" width="9.8" height="9.3" fill="#fff" stroke="#444" stroke-width="1.1"/>
<path d="M120.2 48v9.4M115.3 53.3h9.4" stroke="#3fa34d" stroke-width="1.5"/>
<path d="M125 69.5h-8.3v9h9.3v-5" stroke="#444" stroke-width="1.1"/>
<path d="M118.5 77.5l7.3-7.3" stroke="#2e6fc0" stroke-width="2.4"/>
<path d="M125.2 70.8l1.8-1.8" stroke="#e0506b" stroke-width="2.6"/>
<path d="M126 89v-2.6h-9.3v9.2h6" stroke="#444" stroke-width="1.1"/>
<path d="M118.8 88.5l7 7M126.8 92.5v3.7h-3.7" stroke="#f0a030" stroke-width="1.4"/>
<path d="M129.25 78.3h6.2" stroke="#444" stroke-width=".8"/>
<!-- Bizonylat printer -->
<g stroke="#3e3e3e" stroke-width="1.2" fill="#fff">
  <rect x="196.4" y="49.6" width="13.2" height="8"/>
  <rect x="192.2" y="57.5" width="21.3" height="9.6"/>
  <rect x="196.4" y="63.5" width="7.6" height="8.1"/>
  <rect x="204.1" y="62" width="11.5" height="10.8"/>
</g>
<rect x="197.8" y="64.9" width="4.8" height="5.3" fill="#a9a9a9"/>
<rect x="205.8" y="63.7" width="8.1" height="7.4" fill="#63afe0"/>
<circle cx="195" cy="60.4" r="1" fill="#2e6fc0"/>
<path d="M186.5 87.8h5" stroke="#444" stroke-width=".8"/>
<!-- Lista etc faded -->
<g stroke="#cdcdcd" stroke-width="1.1">
  <rect x="232.6" y="48.7" width="8.8" height="10.4"/>
  <path d="M235 51v6"/>
  <rect x="231.6" y="67.4" width="9.6" height="10.2"/>
  <path d="M233.5 70.5h6M233.5 73h4"/>
  <circle cx="239.5" cy="76" r="2.5"/>
</g>
<g stroke-width="1.1">
  <rect x="231.2" y="88.9" width="5.4" height="5.6" fill="#63aee0" stroke="none"/>
  <path d="M233.3 88.5v-2h6l2.2 2.6" stroke="#333" stroke-width="1.2"/>
  <path d="M238 96l3.8-4.2" stroke="#666" stroke-width="2.6"/>
</g>
<!-- navigation faded -->
<g stroke="#cfcfcf" stroke-width="1.1">
  <path d="M339.3 48.8h9.2l-3.5 4.8v5.6h-2.2v-5.6z"/>
  <path d="M383 53.5l2.2 2 2.2-2"/>
  <path d="M339.3 67.6h9.2l-3.5 4.8v5.6h-2.2v-5.6z"/>
  <rect x="344.5" y="72.5" width="5.5" height="6.5" fill="#f0f0f0"/>
  <circle cx="344.8" cy="90.3" r="3.7"/>
  <path d="M342.2 93l-3.2 3.6"/>
  <circle cx="421.6" cy="61.6" r="5.2"/>
  <path d="M419.3 63l2.3-2.3 2.3 2.3"/>
  <circle cx="421.6" cy="85.9" r="5.2"/>
  <path d="M419.3 84.8l2.3 2.3 2.3-2.3"/>
</g>
<path d="M352.3 97.6h5" stroke="#cfcfcf" stroke-width=".8"/>
<!-- Rogzites floppy -->
<path d="M490.6 51.2h19.8v20.2h-17l-2.8-2.8z" fill="#e8b6e2" stroke="#c47cbf" stroke-width="1.1"/>
<rect x="493.8" y="52.2" width="13.2" height="7" fill="#fff" stroke="#c47cbf" stroke-width=".6"/>
<rect x="496" y="64.5" width="9.4" height="6.6" fill="#fff" stroke="#c47cbf" stroke-width=".6"/>
<path d="M497.8 66.5v2" stroke="#999" stroke-width="1"/>
<path d="M484.8 87.8h5.3" stroke="#444" stroke-width=".8"/>
<!-- visszavonas arrow -->
<path d="M538 53.8h-10M531.3 50.4l-3.6 3.4 3.6 3.4" stroke="#c9464f" stroke-width="1.3"/>
<g stroke="#d2d2d2" stroke-width="1.1">
  <path d="M537 70.5a5 5 0 1 1-1.2-2.2"/>
  <path d="M536 67.6v2.8h-2.6"/>
  <rect x="528" y="89.5" width="10" height="8" rx="1.5"/>
  <path d="M530 89.5v-2.5h6v2.5"/>
</g>
<!-- Beszuras faded -->
<g stroke="#d2d2d2" stroke-width="1.1">
  <rect x="639.4" y="51.5" width="18" height="19.5"/>
  <path d="M639.4 56.5h18M639.4 61.5h18M639.4 66.5h18M645.4 51.5v19.5M651.4 51.5v19.5"/>
  <rect x="647.5" y="57.5" width="15" height="5" fill="#f0f0f0"/>
  <path d="M641 59.9h5M642.8 58l-1.8 1.9 1.8 1.9"/>
</g>
<g stroke="#d0d0d0" stroke-width="1.1">
  <rect x="677.8" y="49" width="11" height="11"/>
  <path d="M677.8 54.5h11M677.8 57h11M683.3 50.5v2.5M682 51.7h2.6"/>
  <rect x="677.8" y="67.8" width="11" height="11"/>
  <path d="M677.8 70.5h11M677.8 73h11M683.3 75v2.5M682 76.3h2.6"/>
  <rect x="677.8" y="86.5" width="11" height="11"/>
  <path d="M677.8 89h11"/>
  <circle cx="685.5" cy="94.5" r="2.2"/>
</g>
<path d="M712.3 59h4.6" stroke="#c8c8c8" stroke-width=".8"/>
<!-- arrows -->
<g stroke="#4a92cc" stroke-width="1.2">
  <path d="M729.1 49v10M725.2 52.8l3.9-3.9 3.9 3.9"/>
  <path d="M729.1 66.3v11.3M725.2 73.8l3.9 3.9 3.9-3.9"/>
</g>
<g stroke="#333" stroke-width="1.1" fill="#fff">
  <path d="M742.6 48.8h5.5l1.5 1.5v7h-7z"/>
  <path d="M746.3 51.8h5.3l2.8 2.8v5h-8.1z"/>
  <path d="M748.2 55.5h2.5" stroke-width=".8"/>
</g>
<g stroke="#d0d0d0" stroke-width="1.1" fill="none">
  <path d="M742.6 67.5h5.5l1.5 1.5v7h-7z"/>
  <path d="M746.3 70.5h5.3l2.8 2.8v5h-8.1z" fill="#f0f0f0"/>
  <rect x="724.3" y="86.7" width="11" height="8.5"/>
  <path d="M724.3 89h11M727.5 91v3M732 91v3"/>
  <path d="M742.6 89h4v8h-4zM746.5 92h7v5.5h-7z"/>
  <path d="M744 89v-2h3v2"/>
  <rect x="761.4" y="80.5" width="11.5" height="10.4"/>
  <path d="M761.4 83h11.5M761.4 86h11.5M765 83v7.9"/>
  <circle cx="770.5" cy="88.5" r="1.8"/>
</g>
<rect x="761.4" y="56.2" width="11.6" height="10.6" fill="#fff" stroke="#444" stroke-width="1.1"/>
<rect x="761.4" y="56.2" width="11.6" height="2.4" fill="#3f8fd8"/>
<circle cx="766.9" cy="62.7" r="1.6" fill="#e0323c"/>
<!-- Nezet -->
<rect x="785.4" y="49.4" width="11.2" height="10.3" fill="#fff" stroke="#444" stroke-width="1.1"/>
<rect x="785.4" y="49.4" width="11.2" height="2.3" fill="#3f8fd8"/>
<rect x="787.3" y="52.4" width="2" height="6.6" fill="#9a9a9a"/>
<rect x="785.4" y="68" width="11.2" height="10.3" fill="#fff" stroke="#444" stroke-width="1.1"/>
<rect x="785.4" y="68" width="11.2" height="2.3" fill="#3f8fd8"/>
<path d="M792.5 74.2h-5.5M789 72.2l-2 2 2 2" stroke="#1f5fa8" stroke-width="1.1"/>
<g stroke="#d2d2d2" stroke-width="1.1">
  <rect x="786" y="86.3" width="9.2" height="10.8"/>
  <path d="M788.5 91.5h4"/>
  <path d="M803.5 55.5h5.5v2.5h-5.5zM805.5 58v8M805.5 60.5h2.5M805.5 64h2.5"/>
  <rect x="808.5" y="59" width="6.8" height="7.3"/>
  <path d="M803.5 80.3h5.5v2.5h-5.5zM805.5 82.8v8M805.5 85h2.5M805.5 88.5h2.5"/>
  <rect x="808.5" y="83.5" width="6.8" height="7.3"/>
</g>
<path d="M837.5 111.3l3.2-3.1 3.2 3.1" stroke="#555" stroke-width="1"/>
<!-- form icons -->
<path d="M277.6 139.6v8M275.6 141.4l2-1.8M281.4 139.6v8M279.4 141.4l2-1.8" stroke="#fff" stroke-width="1.2"/>
<g fill="#222">
  <circle cx="224.6" cy="143.4" r=".95"/><circle cx="227.3" cy="143.4" r=".95"/><circle cx="230" cy="143.4" r=".95"/>
  <circle cx="224.6" cy="162.4" r=".95"/><circle cx="227.3" cy="162.4" r=".95"/><circle cx="230" cy="162.4" r=".95"/>
  <circle cx="404.6" cy="143.4" r=".95"/><circle cx="407.3" cy="143.4" r=".95"/><circle cx="410" cy="143.4" r=".95"/>
  <circle cx="789" cy="143.3" r=".95"/><circle cx="791.7" cy="143.3" r=".95"/><circle cx="794.4" cy="143.3" r=".95"/>
</g>
<g stroke="#666" stroke-width="1">
  <path d="M436.9 160.4l2.6 2.5 2.6-2.5"/>
  <path d="M257.2 179.8l2.4 2.3 2.4-2.3"/>
  <path d="M526.8 179.8l2.4 2.3 2.4-2.3"/>
  <path d="M422.5 198.6l2.4 2.3 2.4-2.3"/>
</g>
<g stroke="#555" stroke-width="1.2">
  <path d="M327.4 160.2v4.5a1.3 1.3 0 0 0 2.6 0v-5a2 2 0 0 0-4 0v4"/>
  <path d="M268.5 179.3v4.5a1.3 1.3 0 0 0 2.6 0v-5a2 2 0 0 0-4 0v4"/>
  <path d="M538.2 179.3v4.5a1.3 1.3 0 0 0 2.6 0v-5a2 2 0 0 0-4 0v4"/>
  <path d="M434.4 198.1v4.5a1.3 1.3 0 0 0 2.6 0v-5a2 2 0 0 0-4 0v4"/>
</g>
<!-- taskbar icons -->
<path d="M113.3 518.6v7.6h1.8M113.3 521.6h2" stroke="#5a9ad8" stroke-width="1"/>
<rect x="112.4" y="516" width="8.4" height="2.6" rx="1" fill="#f4b04a" stroke="#d08a30" stroke-width=".5"/>
<rect x="115.2" y="520.3" width="8.1" height="2.6" rx="1" fill="#46b866" stroke="#2a8a48" stroke-width=".5"/>
<rect x="114.9" y="524.9" width="8.4" height="2.6" rx="1" fill="#e8606e" stroke="#b84050" stroke-width=".5"/>
<path d="M236.3 517.2l8.8 8.5M245.1 517.2l-8.8 8.5" stroke="#eab0b5" stroke-width="1.1"/>
<path d="M377.2 517.3l9.3 8.9M386.5 517.3l-9.3 8.9" stroke="#eab0b5" stroke-width="1.1"/>
<rect x="253.5" y="516.4" width="10.8" height="9.4" fill="#fff" stroke="#555" stroke-width="1"/>
<rect x="253.5" y="516.4" width="10.8" height="2" fill="#3f8fd8"/>
<path d="M258.9 527.5v-7M256.5 522.3l2.4-2.4 2.4 2.4" stroke="#2a6bb5" stroke-width="1"/>
</svg>

<div class="t" style="left:309.55px;top:7.37px;font-size:9.256px;color:#e9eef3;transform:scaleX(0.980)">Bevitel</div>
<div class="t" style="left:385.83px;top:7.37px;font-size:9.256px;color:#ffffff;transform:scaleX(0.901)">sERPa_3_130 - Számfejtés felvétel - sERPa - Teszt</div>
<div class="t" style="left:124.45px;top:29.60px;font-size:10.4px;color:#444;transform:scaleX(0.857)">Program</div>
<div class="t" style="left:177.87px;top:29.60px;font-size:10.4px;color:#444;transform:scaleX(0.835)">Funkciók</div>
<div class="t" style="left:231.54px;top:29.60px;font-size:10.4px;color:#444;transform:scaleX(0.880)">Nézet</div>
<div class="t" style="left:275.47px;top:29.60px;font-size:10.4px;color:#444;transform:scaleX(0.828)">Eszközök</div>
<div class="t" style="left:331.24px;top:29.60px;font-size:10.4px;color:#444;transform:scaleX(0.878)">Műveletek</div>
<div class="t" style="left:128.56px;top:49.86px;font-size:9.88px;color:#333;transform:scaleX(0.893)">Felvétel</div>
<div class="t" style="left:128.30px;top:68.66px;font-size:9.88px;color:#333;transform:scaleX(0.914)">Módosítás</div>
<div class="t" style="left:128.32px;top:87.66px;font-size:9.88px;color:#333;transform:scaleX(0.863)">Lekérdezés</div>
<div class="t" style="left:122.55px;top:103.56px;font-size:9.88px;color:#333;transform:scaleX(0.914)">Üzemmód</div>
<div class="t" style="left:185.55px;top:77.86px;font-size:9.88px;color:#333;transform:scaleX(0.920)">Bizonylat</div>
<div class="t" style="left:244.07px;top:49.86px;font-size:9.88px;color:#b2b2b2;transform:scaleX(0.880)">Lista</div>
<div class="t" style="left:244.56px;top:68.66px;font-size:9.88px;color:#b2b2b2;transform:scaleX(0.900)">Kapcsolódó funkció</div>
<div class="t" style="left:244.55px;top:87.66px;font-size:9.88px;color:#333;transform:scaleX(0.903)">Kapcsolódó analitika</div>
<div class="t" style="left:213.55px;top:103.56px;font-size:9.88px;color:#333;transform:scaleX(0.915)">Kapcsolódó funkciók</div>
<div class="t" style="left:351.60px;top:49.86px;font-size:9.88px;color:#b2b2b2;transform:scaleX(0.814)">Szűrés</div>
<div class="t" style="left:351.56px;top:68.66px;font-size:9.88px;color:#b2b2b2;transform:scaleX(0.889)">Szűrési feltétel</div>
<div class="t" style="left:351.59px;top:87.66px;font-size:9.88px;color:#b2b2b2;transform:scaleX(0.829)">Keresés</div>
<div class="t" style="left:429.05px;top:56.76px;font-size:9.88px;color:#b2b2b2;transform:scaleX(0.917)">Előző</div>
<div class="t" style="left:429.06px;top:80.76px;font-size:9.88px;color:#b2b2b2;transform:scaleX(0.897)">Következő</div>
<div class="t" style="left:384.04px;top:103.56px;font-size:9.88px;color:#333;transform:scaleX(0.932)">Navigáció</div>
<div class="t" style="left:484.07px;top:77.86px;font-size:9.88px;color:#333;transform:scaleX(0.868)">Rögzítés</div>
<div class="t" style="left:540.38px;top:49.86px;font-size:9.88px;color:#333;transform:scaleX(0.847)">Visszavonás</div>
<div class="t" style="left:540.34px;top:68.66px;font-size:9.88px;color:#b2b2b2;transform:scaleX(0.923)">Újratöltés</div>
<div class="t" style="left:540.36px;top:87.66px;font-size:9.88px;color:#b2b2b2;transform:scaleX(0.888)">Direkt szinkronizálás</div>
<div class="t" style="left:531.35px;top:103.56px;font-size:9.88px;color:#333;transform:scaleX(0.908)">Adatbázis</div>
<div class="t" style="left:634.39px;top:77.56px;font-size:9.88px;color:#b2b2b2;transform:scaleX(0.823)">Beszúrás</div>
<div class="t" style="left:690.04px;top:49.86px;font-size:9.88px;color:#b2b2b2;transform:scaleX(0.924)">Felfelé</div>
<div class="t" style="left:690.05px;top:68.66px;font-size:9.88px;color:#b2b2b2;transform:scaleX(0.916)">Lefelé</div>
<div class="t" style="left:690.59px;top:87.66px;font-size:9.88px;color:#b2b2b2;transform:scaleX(0.831)">Törlés</div>
<div class="t" style="left:679.58px;top:103.56px;font-size:9.88px;color:#333;transform:scaleX(0.842)">Szerkesztés</div>
<div class="t" style="left:788.25px;top:103.56px;font-size:9.88px;color:#333;transform:scaleX(0.918)">Nézet</div>
<div class="t" style="left:825.03px;top:75.02px;font-size:9.36px;color:#444;transform:scaleX(1.000)">E</div>
<div class="t" style="left:114.34px;top:120.66px;font-size:9.88px;color:#222;transform:scaleX(0.939)">Adatbevitel</div>
<div class="t" style="left:166.56px;top:121.16px;font-size:9.88px;color:#222;transform:scaleX(0.889)">Megjegyzés</div>
<div class="t" style="left:221.55px;top:121.16px;font-size:9.88px;color:#222;transform:scaleX(0.914)">Kapcsolódó bizonylatok</div>
<div class="t" style="left:143.05px;top:139.46px;font-size:9.672px;color:#333;transform:scaleX(0.927)">Dátum:</div>
<div class="t" style="left:135.55px;top:157.96px;font-size:9.672px;color:#333;transform:scaleX(0.928)">Kifizetés:</div>
<div class="t" style="left:136.57px;top:176.96px;font-size:9.672px;color:#333;transform:scaleX(0.889)">Személy:</div>
<div class="t" style="left:127.58px;top:195.96px;font-size:9.672px;color:#333;transform:scaleX(0.878)">Jogviszony:</div>
<div class="t" style="left:112.07px;top:213.96px;font-size:9.672px;color:#333;transform:scaleX(0.892)">Rendelkezésre álló szabadság:</div>
<div class="t" style="left:176.49px;top:139.46px;font-size:9.672px;color:#222;transform:scaleX(0.840)">2022.07.31.</div>
<div class="t" style="left:176.49px;top:157.96px;font-size:9.672px;color:#222;transform:scaleX(0.840)">2022.07.31.</div>
<div class="t" style="left:239.69px;top:139.20px;font-size:10.192000000000002px;color:#333;transform:scaleX(1.000)">/</div>
<div class="t" style="left:290.36px;top:139.46px;font-size:9.672px;color:#333;transform:scaleX(0.914)">Átváltás dátum:</div>
<div class="t" style="left:356.59px;top:139.46px;font-size:9.672px;color:#222;transform:scaleX(0.842)">2022.06.15.</div>
<div class="t" style="left:417.44px;top:139.46px;font-size:9.672px;color:#333;transform:scaleX(0.946)">Külföldi jövedelem:</div>
<div class="t" style="left:513.28px;top:139.46px;font-size:9.672px;color:#333;transform:scaleX(0.980)">Állapot:</div>
<div class="t" style="left:674.07px;top:139.46px;font-size:9.672px;color:#333;transform:scaleX(0.899)">Bevallás dátum:</div>
<div class="t" style="left:340.33px;top:157.96px;font-size:9.672px;color:#222;transform:scaleX(0.967)">Normál</div>
<div class="t" style="left:176.29px;top:176.96px;font-size:9.672px;color:#222;transform:scaleX(0.852)">TesztSZEBA</div>
<div class="t" style="left:282.08px;top:176.96px;font-size:9.672px;color:#222;transform:scaleX(0.879)">Teszt személy</div>
<div class="t" style="left:176.27px;top:195.96px;font-size:9.672px;color:#222;transform:scaleX(0.891)">Munkaviszony</div>
<div class="t" style="left:260.14px;top:213.96px;font-size:9.672px;color:#222;transform:scaleX(0.960)">30</div>
<div class="t" style="left:292.83px;top:213.96px;font-size:9.672px;color:#333;transform:scaleX(0.962)">nap</div>
<div class="t" style="left:333.05px;top:213.96px;font-size:9.672px;color:#222;transform:scaleX(0.923)">240</div>
<div class="t" style="left:370.51px;top:213.96px;font-size:9.672px;color:#333;transform:scaleX(1.015)">óra</div>
<div class="t" style="left:415.37px;top:213.96px;font-size:9.672px;color:#333;transform:scaleX(0.892)">Felhasználható betegszabadság:</div>
<div class="t" style="left:571.84px;top:213.96px;font-size:9.672px;color:#222;transform:scaleX(0.960)">15</div>
<div class="t" style="left:604.12px;top:213.96px;font-size:9.672px;color:#333;transform:scaleX(0.989)">nap</div>
<div class="t" style="left:644.75px;top:213.96px;font-size:9.672px;color:#222;transform:scaleX(0.923)">120</div>
<div class="t" style="left:682.24px;top:213.96px;font-size:9.672px;color:#333;transform:scaleX(0.961)">óra</div>
<div class="t" style="left:122.17px;top:240.02px;font-size:9.568px;font-weight:700;letter-spacing:0.3px;color:#111;transform:scaleX(0.894)">Naptár:</div>
<div class="t" style="left:116.58px;top:257.02px;font-size:9.152000000000001px;color:#333;transform:scaleX(0.911)">2022. júl.</div>
<div class="t" style="left:124.84px;top:517.76px;font-size:9.672px;color:#333;transform:scaleX(0.943)">Menü</div>
<div class="t" style="left:266.26px;top:517.76px;font-size:9.672px;color:#333;transform:scaleX(0.900)">Számfejtés</div>
<div class="t" style="left:123.34px;top:289.25px;font-size:8.632000000000001px;letter-spacing:0.25px;color:#9a9a9a;transform:scaleX(0.840)">Törvény szerinti munkaidő</div>
<div class="t" style="left:123.35px;top:304.79px;font-size:8.216000000000001px;font-weight:700;letter-spacing:0.45px;color:#111;transform:scaleX(0.854)">Munkarend szerinti munkaidő</div>
<div class="t" style="left:123.35px;top:320.12px;font-size:8.216000000000001px;font-weight:700;letter-spacing:0.45px;color:#111;transform:scaleX(0.851)">Ledolgozott nap</div>
<div class="t" style="left:123.32px;top:335.24px;font-size:8.632000000000001px;letter-spacing:0.25px;color:#333;transform:scaleX(0.870)">Normál (ledolgozott) munkaidő</div>
<div class="t" style="left:123.32px;top:350.57px;font-size:8.632000000000001px;letter-spacing:0.25px;color:#33339a;transform:scaleX(0.876)">Túlóra - pihenőidő</div>
<div class="t" style="left:123.34px;top:365.90px;font-size:8.632000000000001px;letter-spacing:0.25px;color:#33339a;transform:scaleX(0.845)">Pótlékok</div>
<div class="t" style="left:123.34px;top:381.23px;font-size:8.632000000000001px;letter-spacing:0.25px;color:#33339a;transform:scaleX(0.833)">Fizetett távollét</div>
<div class="t" style="left:123.33px;top:396.56px;font-size:8.632000000000001px;letter-spacing:0.25px;color:#33339a;transform:scaleX(0.856)">Nem fizetett távollét</div>
<div class="t" style="left:123.34px;top:411.89px;font-size:8.632000000000001px;letter-spacing:0.25px;color:#33339a;transform:scaleX(0.837)">Összes óra</div>
<div class="t" style="left:123.34px;top:427.43px;font-size:8.216000000000001px;font-weight:700;letter-spacing:0.45px;color:#111;transform:scaleX(0.867)">Pihenőnap</div>
<div class="t" style="left:123.35px;top:442.76px;font-size:8.216000000000001px;font-weight:700;letter-spacing:0.45px;color:#111;transform:scaleX(0.852)">Munkaszüneti nap</div>
<div class="t" style="left:123.36px;top:458.09px;font-size:8.216000000000001px;font-weight:700;letter-spacing:0.45px;color:#111;transform:scaleX(0.823)">Fizetett szabadság</div>
<div class="t" style="left:123.36px;top:473.42px;font-size:8.216000000000001px;font-weight:700;letter-spacing:0.45px;color:#111;transform:scaleX(0.816)">Fizetés nélküli szabadság</div>
<div class="t" style="left:123.36px;top:488.75px;font-size:8.216000000000001px;font-weight:700;letter-spacing:0.45px;color:#111;transform:scaleX(0.816)">Betegszabadság</div>
<div class="t" style="left:123.37px;top:504.08px;font-size:8.216000000000001px;font-weight:700;letter-spacing:0.45px;color:#111;transform:scaleX(0.809)">Egészségbiztosítási és családt. ellátás</div>

</body></html>
